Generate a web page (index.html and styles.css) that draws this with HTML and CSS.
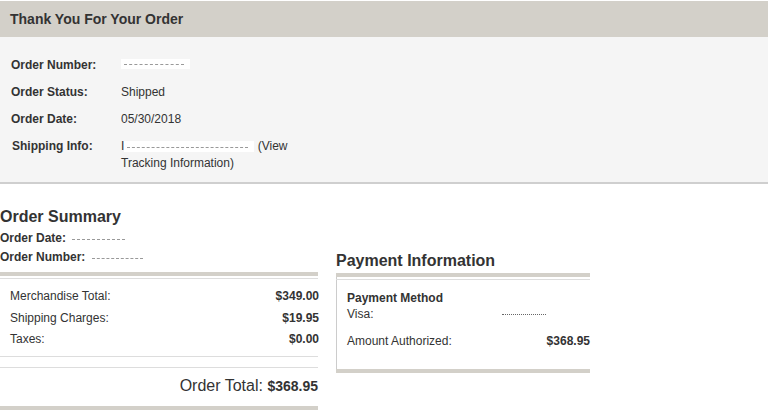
FILE: index.html
```html
<!DOCTYPE html>
<html>
<head>
<meta charset="utf-8">
<link rel="stylesheet" href="styles.css">
</head>
<body>
<div class="page">
  <div class="thanks">
    <h1 class="thanks-title">Thank You For Your Order</h1>
  </div>
  <div class="info">
    <div class="info-row"><span class="info-label">Order Number:</span><span class="info-value"><span class="redact r1"><i></i></span></span></div>
    <div class="info-row"><span class="info-label">Order Status:</span><span class="info-value">Shipped</span></div>
    <div class="info-row"><span class="info-label">Order Date:</span><span class="info-value">05/30/2018</span></div>
    <div class="info-row ship"><span class="info-label">Shipping Info:</span><span class="info-value">I<span class="redact r2"><i></i></span> (View<br>Tracking Information)</span></div>
  </div>

  <div class="lower">
    <div class="summary">
      <h2 class="sec-title">Order Summary</h2>
      <div class="meta">Order Date: <span class="redact r3"><i></i></span></div>
      <div class="meta">Order Number: <span class="redact r4"><i></i></span></div>
      <div class="box">
        <div class="lines">
          <div class="line"><span>Merchandise Total:</span><b>$349.00</b></div>
          <div class="line"><span>Shipping Charges:</span><b>$19.95</b></div>
          <div class="line"><span>Taxes:</span><b>$0.00</b></div>
        </div>
        <div class="total">Order Total: <b>$368.95</b></div>
      </div>
    </div>

    <div class="payment">
      <h2 class="sec-title">Payment Information</h2>
      <div class="pbox">
        <div class="pm-title">Payment Method</div>
        <div class="pm-row"><span>Visa:</span><span class="dots"></span></div>
        <div class="pm-row amt"><span>Amount Authorized:</span><b>$368.95</b></div>
      </div>
    </div>
  </div>
</div>
</body>
</html>
```
FILE: styles.css
```css
html, body { margin: 0; padding: 0; background: #fff; }
body { font-family: Arial, "Liberation Sans", sans-serif; color: #333; font-size: 12px; }
.page { width: 770px; padding-top: 1px; }

.thanks { background: #d3d0c9; width: 768px; height: 36px; box-sizing: border-box; padding: 10px 0 0 10px; }
.thanks-title { margin: 0; font-size: 14px; font-weight: bold; color: #333; line-height: 16px; }

.info { background: #f5f5f5; width: 768px; box-sizing: border-box; padding: 21px 0 10px 11px; border-bottom: 2px solid #cfcfcf; height: 147px; }
.info-row { display: flex; line-height: 14px; margin-bottom: 13px; }
.info-label { width: 110px; font-weight: bold; flex: none; }
.info-value { line-height: 17px; margin-top: -1px; margin-bottom: -2px; }
.ship .info-label { padding-left: 1px; width: 109px; }

.redact { display: inline-block; background: #fff; vertical-align: middle; position: relative; }
.redact i { position: absolute; left: 3px; right: 6px; top: 50%; border-top: 1px dashed #999; }
.r1 { width: 69px; height: 10px; margin-top: -4px; }
.r2 { width: 130px; height: 11px; }
.r3 { width: 62px; height: 8px; }
.r4 { width: 60px; height: 8px; }

.lower { display: flex; padding-top: 23px; }
.sec-title { margin: 0; font-size: 16px; font-weight: bold; color: #333; line-height: 20px; }
.summary { width: 318px; }
.meta { font-weight: bold; line-height: 19px; }
.meta:first-of-type { margin-top: 2px; }
.box { margin-top: 5px; border-top: 4px solid #d3d0c9; }
.lines { border-top: 1px solid #ddd; margin-top: 2px; padding: 7px 0 5px 10px; border-bottom: 1px solid #ddd; }
.lines .line { display: flex; justify-content: space-between; line-height: 21.5px; }
.lines .line b { margin-right: -1px; }
.total { border-top: 1px solid #ddd; margin-top: 10px; text-align: right; font-size: 16px; padding: 8px 0 10px; border-bottom: 4px solid #d3d0c9; line-height: 20px; }
.total b { font-size: 14px; }

.payment { margin-left: 18px; width: 254px; padding-top: 44px; }
.pbox { margin-top: 2px; border-top: 4px solid #d3d0c9; border-bottom: 4px solid #d3d0c9; position: relative; }
.pbox { padding: 13px 0 20px 11px; box-shadow: inset 1px 0 0 #ccc; }
.pbox::before { content: ""; position: absolute; left: 0; right: 0; top: 2px; border-top: 1px solid #ddd; }
.pm-title { font-weight: bold; line-height: 16px; }
.pm-row { display: flex; justify-content: space-between; line-height: 16px; }
.pm-row .dots { width: 44px; border-top: 1px dotted #666; margin: 8px 44px 0 0; }
.pm-row.amt { margin-top: 11px; }
```
